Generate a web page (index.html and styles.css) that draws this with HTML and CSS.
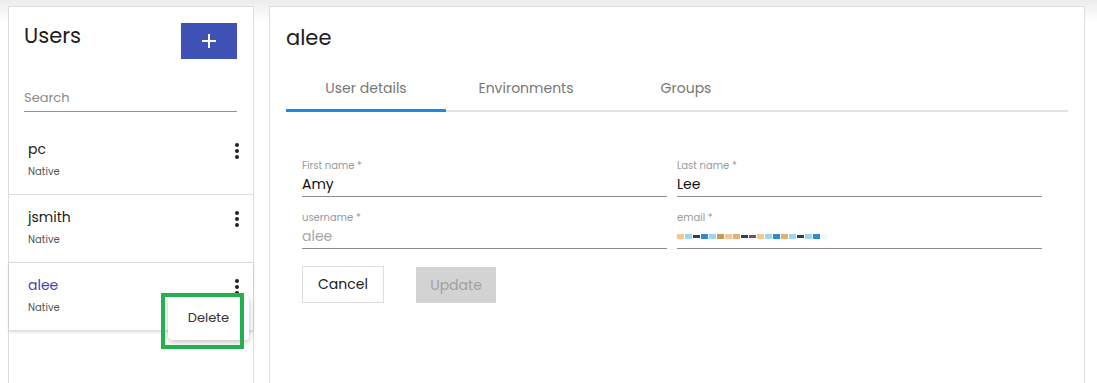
FILE: index.html
```html
<!DOCTYPE html>
<html lang="en">
<head>
    <meta charset="UTF-8">
    <meta name="viewport" content="width=device-width, initial-scale=1.0">
    <title>Users</title>
    <link rel="stylesheet" href="styles.css">
</head>
<body>
    <div class="layout">
        <aside class="panel users-panel">
            <div class="users-head">
                <h2>Users</h2>
                <button class="add-btn" aria-label="Add user">
                    <svg width="14" height="14" viewBox="0 0 14 14"><path d="M7 0v14M0 7h14" stroke="#fff" stroke-width="2"/></svg>
                </button>
            </div>
            <div class="search">
                <input type="text" placeholder="Search">
            </div>
            <ul class="user-list">
                <li class="user-item">
                    <div>
                        <div class="user-name">pc</div>
                        <div class="user-type">Native</div>
                    </div>
                    <span class="kebab"><i></i><i></i><i></i></span>
                </li>
                <li class="user-item">
                    <div>
                        <div class="user-name">jsmith</div>
                        <div class="user-type">Native</div>
                    </div>
                    <span class="kebab"><i></i><i></i><i></i></span>
                </li>
                <li class="user-item selected">
                    <div>
                        <div class="user-name">alee</div>
                        <div class="user-type">Native</div>
                    </div>
                    <span class="kebab"><i></i><i></i><i></i></span>
                    <div class="menu">Delete</div>
                    <div class="highlight"></div>
                </li>
            </ul>
        </aside>

        <main class="panel detail-panel">
            <h2>alee</h2>
            <div class="tabs">
                <div class="tab active">User details</div>
                <div class="tab">Environments</div>
                <div class="tab">Groups</div>
            </div>
            <form class="user-form">
                <div class="fields">
                    <div class="field">
                        <label>First name *</label>
                        <div class="value">Amy</div>
                    </div>
                    <div class="field">
                        <label>Last name *</label>
                        <div class="value">Lee</div>
                    </div>
                    <div class="field">
                        <label>username *</label>
                        <div class="value disabled">alee</div>
                    </div>
                    <div class="field">
                        <label>email *</label>
                        <div class="value masked">
                            <span class="c1"></span><span class="c2"></span><span class="c3"></span><span class="c4"></span><span class="c2"></span><span class="c5"></span><span class="c1"></span><span class="c6"></span><span class="c3"></span><span class="c7"></span><span class="c1"></span><span class="c2"></span><span class="c4"></span><span class="c6"></span><span class="c2"></span><span class="c3"></span><span class="c2"></span><span class="c4"></span><span class="c8"></span>
                        </div>
                    </div>
                </div>
                <div class="actions">
                    <button type="button" class="btn-cancel">Cancel</button>
                    <button type="button" class="btn-update" disabled>Update</button>
                </div>
            </form>
        </main>
    </div>
</body>
</html>
```

FILE: styles.css
```css
body {
    font-family: 'Poppins', 'Open Sans', sans-serif;
    margin: 0;
    padding: 6px 12px 0 8px;
    background: linear-gradient(#ececec 0, #ffffff 22px) no-repeat;
    height: 377px;
    overflow: hidden;
    color: #222;
}
.layout {
    display: flex;
    gap: 15px;
    height: 100%;
}
.panel {
    background-color: #fff;
    border: 1px solid #dcdce2;
    border-bottom: none;
    box-sizing: border-box;
}
.users-panel {
    width: 246px;
    flex-shrink: 0;
}
.detail-panel {
    flex: 1;
    padding: 0 16px;
}
h2 {
    font-size: 21px;
    font-weight: 400;
    margin: 0;
    color: #1c1c1c;
}
.users-head {
    display: flex;
    justify-content: space-between;
    padding: 16px 16px 0 15px;
}
.users-head h2 {
    line-height: 26px;
    margin-top: 0;
}
.add-btn {
    width: 56px;
    height: 36px;
    background-color: #3f51b5;
    border: none;
    display: flex;
    align-items: center;
    justify-content: center;
    padding: 0;
}
.search {
    padding: 25px 16px 0 15px;
}
.search input {
    width: 100%;
    box-sizing: border-box;
    border: none;
    border-bottom: 1px solid #949494;
    font-family: inherit;
    font-size: 13px;
    padding: 2px 0 3px;
    outline: none;
}
.search input::placeholder {
    color: #8a8a8a;
}
.user-list {
    list-style: none;
    margin: 15px 0 0;
    padding: 0;
}
.user-item {
    position: relative;
    height: 68px;
    box-sizing: border-box;
    border-bottom: 1px solid #dedede;
    padding: 12px 14px 0 19px;
    display: flex;
    justify-content: space-between;
    align-items: flex-start;
}
.user-item.selected {
    box-shadow: 0 1px 3px rgba(0, 0, 0, 0.15);
}
.user-name {
    font-size: 14px;
    line-height: 20px;
    color: #1c1c1c;
}
.selected .user-name {
    color: #4b3fa8;
}
.user-type {
    font-size: 10px;
    margin-top: 5px;
    color: #555;
}
.kebab {
    display: flex;
    flex-direction: column;
    gap: 2px;
    padding-top: 4px;
}
.kebab i {
    width: 4px;
    height: 4px;
    border-radius: 50%;
    background-color: #222;
}
.menu {
    position: absolute;
    left: 159px;
    top: 33px;
    width: 81px;
    height: 44px;
    background-color: #fff;
    border-radius: 4px;
    box-shadow: 0 2px 6px rgba(0, 0, 0, 0.25);
    font-size: 13px;
    color: #333;
    display: flex;
    align-items: center;
    justify-content: center;
    z-index: 2;
}
.highlight {
    position: absolute;
    left: 152px;
    top: 30px;
    width: 83px;
    height: 56px;
    box-sizing: border-box;
    border: 4px solid #22b14c;
    z-index: 3;
}
.detail-panel h2 {
    margin-top: 18px;
    line-height: 26px;
}
.tabs {
    display: flex;
    margin-top: 14px;
    border-bottom: 2px solid #e2e2e2;
}
.tab {
    width: 160px;
    text-align: center;
    font-size: 14px;
    color: #777;
    padding: 13px 0 10px;
    margin-bottom: -2px;
    border-bottom: 3px solid transparent;
}
.tab.active {
    border-bottom-color: #1e88e5;
}
.user-form {
    padding: 47px 0 0 16px;
}
.fields {
    display: grid;
    grid-template-columns: 365px 365px;
    column-gap: 10px;
    row-gap: 14px;
}
.field label {
    display: block;
    font-size: 10px;
    color: #9a9a9a;
    line-height: 14px;
}
.field .value {
    font-size: 14px;
    line-height: 20px;
    height: 20px;
    padding: 1px 0 2px;
    border-bottom: 1px solid #8c8c8c;
    color: #111;
}
.field .value.disabled {
    color: #a6a6a6;
}
.value.masked {
    display: flex;
    align-items: center;
    gap: 1px;
}
.masked span {
    width: 7px;
    height: 5px;
}
.masked .c1 { background-color: #f5c890; }
.masked .c2 { background-color: #9fd4f0; }
.masked .c3 { background-color: #2a3e6b; height: 3px; }
.masked .c4 { background-color: #2d8ad0; }
.masked .c5 { background-color: #c79a50; }
.masked .c6 { background-color: #e6b070; }
.masked .c7 { background-color: #7a5068; height: 3px; }
.masked .c8 { background-color: #e8fbff; }
.actions {
    display: flex;
    align-items: flex-end;
    gap: 32px;
    margin-top: 17px;
}
.actions button {
    font-family: inherit;
    font-size: 14px;
    height: 37px;
}
.btn-cancel {
    width: 82px;
    background-color: #fff;
    border: 1px solid #dedede;
    color: #1c1c1c;
}
.btn-update {
    width: 80px;
    height: 36px !important;
    background-color: #d3d3d3;
    border: none;
    color: #a0a0a0;
}
```
